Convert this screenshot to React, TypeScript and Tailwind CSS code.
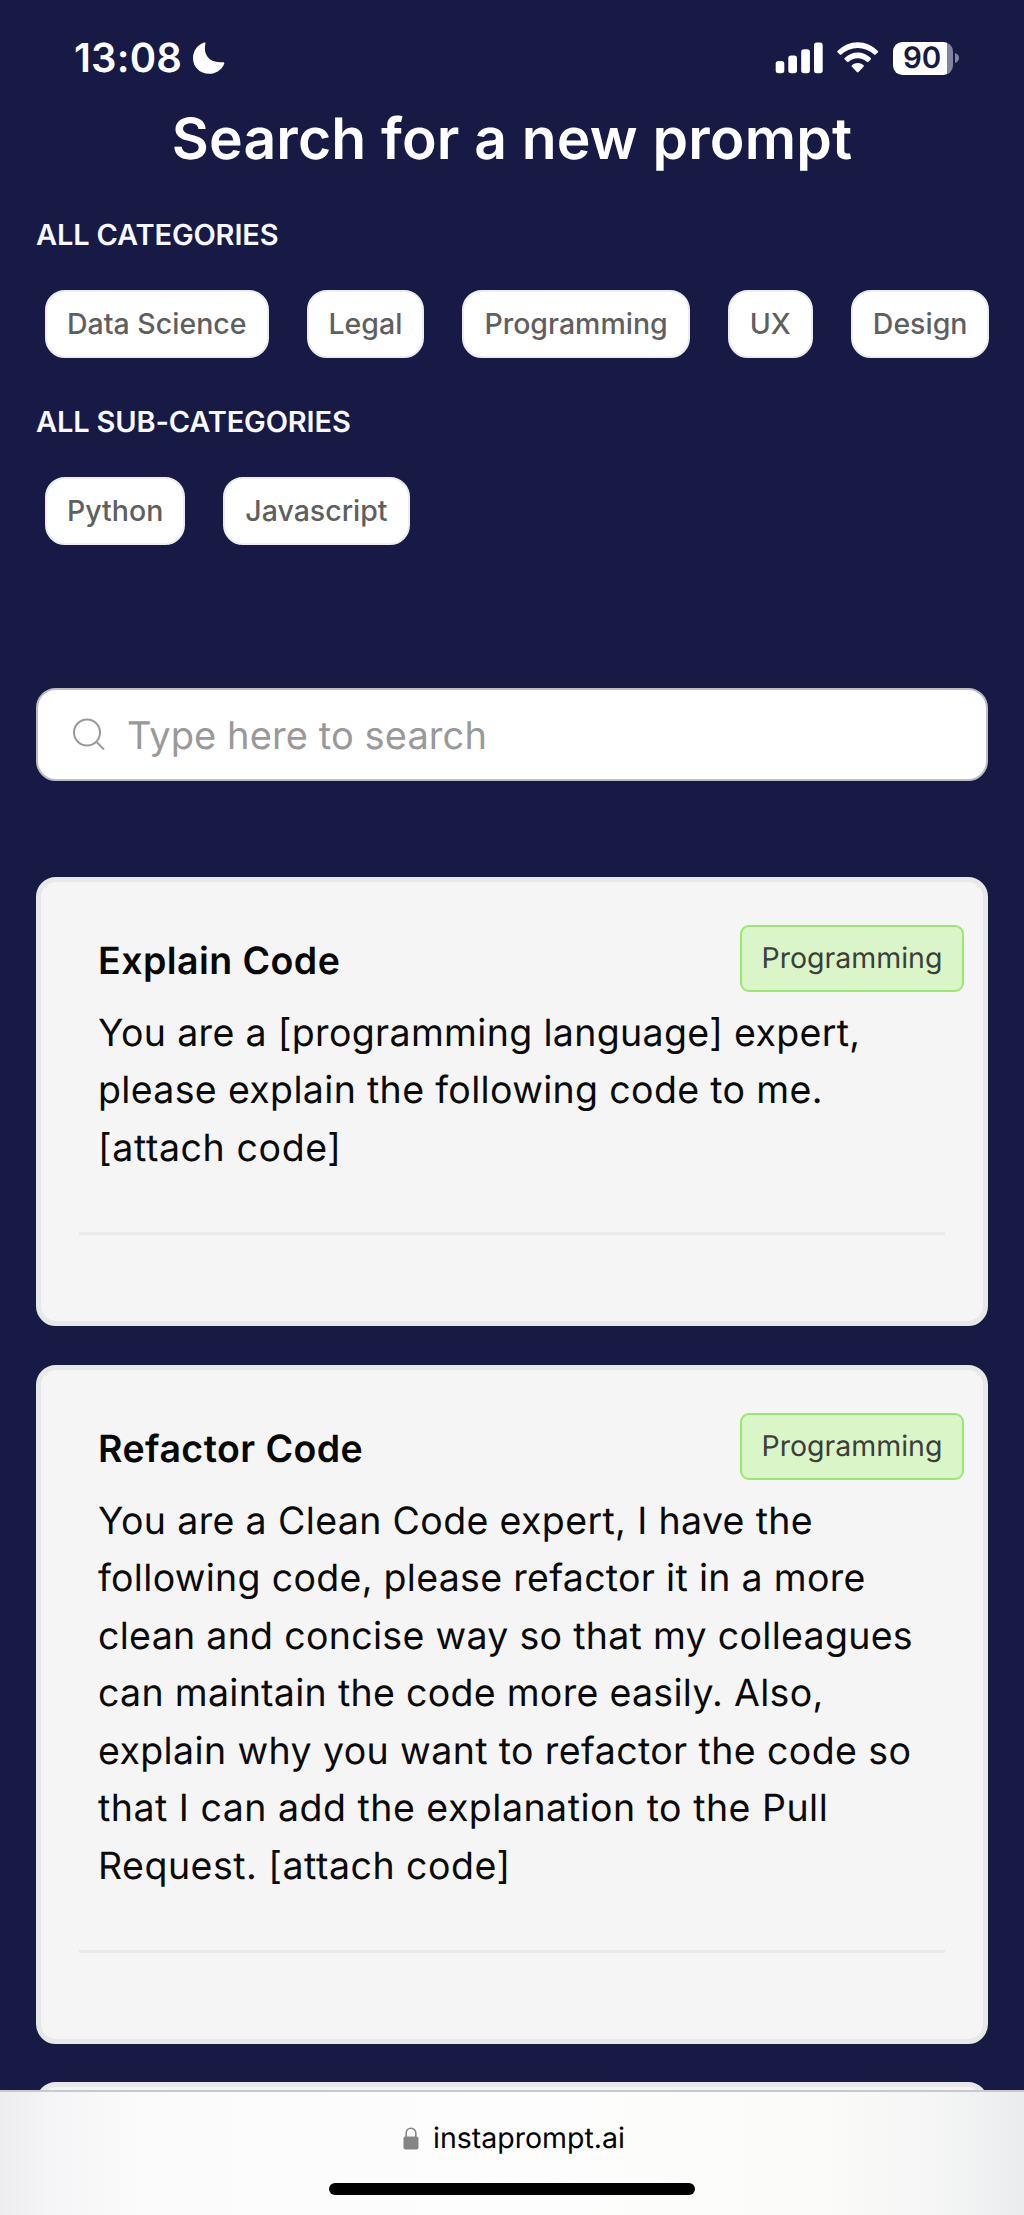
const categories = ['Data Science', 'Legal', 'Programming', 'UX', 'Design']
const subCategories = ['Python', 'Javascript']

const prompts = [
  {
    title: 'Explain Code',
    tag: 'Programming',
    lines: [
      { text: 'You are a [programming language] expert,', spacing: 'tracking-[0.34px]' },
      { text: 'please explain the following code to me.', spacing: 'tracking-[0.34px]' },
      { text: '[attach code]', spacing: 'tracking-[0.6px]' },
    ],
  },
  {
    title: 'Refactor Code',
    tag: 'Programming',
    lines: [
      { text: 'You are a Clean Code expert, I have the', spacing: 'tracking-[0.36px]' },
      { text: 'following code, please refactor it in a more', spacing: 'tracking-[0.3px]' },
      { text: 'clean and concise way so that my colleagues', spacing: 'tracking-[0.3px]' },
      { text: 'can maintain the code more easily. Also,', spacing: 'tracking-[0.3px]' },
      { text: 'explain why you want to refactor the code so', spacing: 'tracking-[0.39px]' },
      { text: 'that I can add the explanation to the Pull', spacing: 'tracking-[0.5px]' },
      { text: 'Request. [attach code]', spacing: 'tracking-[0.5px]' },
    ],
  },
]

function StatusBar() {
  return (
    <div className="flex h-[98px] shrink-0 items-center justify-between pt-[18px] pl-[74px] pr-[65px] text-white">
      <div className="flex items-center">
        <span className="w-[119px] text-[40px] leading-[80px] font-semibold tracking-[0.2px]">13:08</span>
        <svg className="h-8 w-8" viewBox="0 0 32 32" fill="currentColor">
          <path d="M10.6.7C11.8.1 12.8.5 12.4 1.8 10 12 15.5 21.3 29.5 20.2 31 20 31.8 20.6 31.1 22 28.5 28.2 22.8 31.8 16 31.8 7 31.8 0 25.200 0 16.300 0 9 4.200 3 10.6.7Z" />
        </svg>
      </div>
      <div className="flex items-center">
        <svg className="h-[34px] w-[118px]" viewBox="0 0 118 34" fill="currentColor">
          <rect x="0.7" y="20" width="8.6" height="12.3" rx="2.8" />
          <rect x="13.3" y="14.5" width="8.7" height="17.8" rx="2.8" />
          <rect x="26.2" y="8.3" width="8.7" height="24" rx="2.8" />
          <rect x="39" y="1.6" width="8.7" height="30.7" rx="2.8" />
          <path d="M62.7 9.8a27.6 27.6 0 0 1 40 0c.6.6.6 1 .1 1.600l-2.200 2.200c-.5.5-1 .5-1.500 0a23.600 23.600 0 0 0-32.800 0c-.5.5-1 .5-1.500 0l-2.200-2.200c-.5-.6-.5-1 .1-1.600Z" />
          <path d="M69.7 16.9a18.600 18.600 0 0 1 26 0c.5.5.5 1 0 1.500l-2.400 2.400c-.5.5-1 .5-1.500 0a13.200 13.200 0 0 0-18.200 0c-.5.5-1 .5-1.500 0l-2.400-2.400c-.5-.5-.5-1 0-1.500Z" />
          <path d="M77 24.100a9 9 0 0 1 11.400 0c.6.500.6 1 .1 1.600l-5 5.400c-.5.6-1.100.6-1.600 0l-5-5.400c-.5-.6-.5-1.100.1-1.600Z" />
        </svg>
        <div className="flex h-[33px] w-[60px] items-center rounded-[9.500px] bg-[linear-gradient(90deg,#ffffff_54px,#81839f_54px)] pl-[10px]">
          <span className="text-[29.500px] leading-[33px] font-semibold text-[#161a45]">90</span>
        </div>
        <svg className="ml-[2px] h-[10px] w-[4px]" viewBox="0 0 4 10" fill="#81839f">
          <path d="M0 0c2.400.6 4 2.400 4 5s-1.600 4.400-4 5Z" />
        </svg>
      </div>
    </div>
  )
}

function Pills({ items }: { items: string[] }) {
  return (
    <div className="mt-[35px] flex gap-[38px] pl-[9px]">
      {items.map((item) => (
        <button
          key={item}
          className="h-[68px] rounded-[20px] border-2 border-[#ececf1] bg-white px-[20px] text-[28.500px] leading-[62px] font-medium whitespace-nowrap text-[#5f5f5f]"
        >
          {item}
        </button>
      ))}
    </div>
  )
}

function PromptCard({ title, tag, lines }: (typeof prompts)[number]) {
  return (
    <article className="rounded-[20px] border-[5px] border-[#e7e8e8] bg-[#f5f5f5] pt-[43px] pb-[86px]">
      <div className="flex h-[67px] items-start justify-between pl-[57px] pr-[19px]">
        <h2 className="mt-[8px] text-[37.500px] leading-[58px] font-semibold tracking-[0.44px] text-[#080808]">{title}</h2>
        <span className="flex h-[67px] w-[224px] items-center justify-center rounded-[9px] border-2 border-[#98e86e] bg-[#daf5c8] text-[28.500px] text-[#3a3f3a]">
          {tag}
        </span>
      </div>
      <p className="mt-[13px] pl-[57px] text-[37.500px] leading-[57.500px] whitespace-nowrap text-[#0a0a0a]">
        {lines.map(({ text, spacing }) => (
          <span key={text} className={`block ${spacing}`}>
            {text}
          </span>
        ))}
      </p>
      <div className="mx-[38px] mt-[55px] h-[3px] bg-[#e8e9e9]" />
    </article>
  )
}

function BrowserBar() {
  return (
    <footer className="absolute inset-x-0 bottom-0 flex h-[125px] flex-col items-center border-t-2 border-[#c9c9cd] bg-[linear-gradient(90deg,#ededf0_0%,#f5f5f7_5%,#fbfbfb_14%,#fdfdfd_50%,#fbfcf9_80%,#f5f6f5_91%,#ebecee_100%)] bg-origin-border">
      <div className="mt-[22px] flex h-[48px] items-center pl-[4px]">
        <svg className="mr-[14px] h-[23px] w-[16px]" viewBox="0 0 16 23">
          <path d="M3.2 11V6a4.800 4.800 0 0 1 9.600 0v5" fill="none" stroke="#858585" strokeWidth="1.6" />
          <rect x="0.5" y="9.5" width="15" height="13" rx="2" fill="#858585" />
        </svg>
        <span className="text-[28.500px] leading-[48px] text-black">instaprompt.ai</span>
      </div>
      <div className="mt-[21px] h-[12px] w-[366px] rounded-full bg-black" />
    </footer>
  )
}

export default function App() {
  return (
    <main className="relative h-[2215px] w-[1024px] overflow-hidden bg-[#161a45] font-['Inter',sans-serif] [text-rendering:geometricPrecision]">
      <StatusBar />
      <h1 className="pt-px text-center text-[57px] leading-[80px] font-semibold tracking-[0.2px] text-white">
        Search for a new prompt
      </h1>

      <div className="px-[36px]">
        <h3 className="mt-[36px] text-[29px] leading-[40px] font-semibold tracking-[-0.15px] text-[#f8f8ff]">
          ALL CATEGORIES
        </h3>
        <Pills items={categories} />
        <h3 className="mt-[43.500px] text-[29px] leading-[40px] font-semibold tracking-[-0.15px] text-[#f8f8ff]">
          ALL SUB-CATEGORIES
        </h3>
        <Pills items={subCategories} />

        <div className="mt-[143px] flex h-[93px] items-center rounded-[20px] border-[2.500px] border-[#bdbdc4] bg-white pl-[35px]">
          <svg className="mr-[22px] h-[32px] w-[32px]" viewBox="0 0 32 32" fill="none" stroke="#999999" strokeWidth="2">
            <circle cx="14" cy="14.5" r="13" />
            <path d="M23.5 24 31 31.500" />
          </svg>
          <span className="pt-[3px] text-[38px] leading-[58px] tracking-[0.1px] text-[#999999]">Type here to search</span>
        </div>

        <div className="mt-[96px] flex flex-col gap-[38.500px]">
          {prompts.map((prompt) => (
            <PromptCard key={prompt.title} {...prompt} />
          ))}
          <div className="-mt-px h-[200px] rounded-[20px] border-[5px] border-[#e7e8e8] bg-[#f5f5f5]" />
        </div>
      </div>

      <BrowserBar />
    </main>
  )
}
